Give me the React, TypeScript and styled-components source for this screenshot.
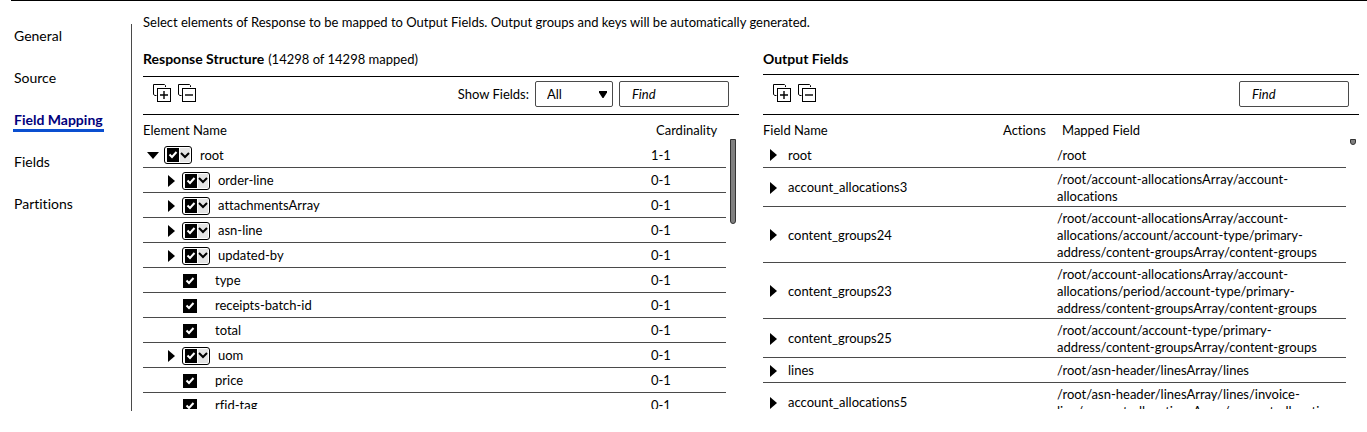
import React from "react";
import styled, { createGlobalStyle, css } from "styled-components";

const GlobalStyle = createGlobalStyle`
  *, *::before, *::after { box-sizing: border-box; }
  body {
    margin: 0;
    background: #fff;
    color: #000;
    font: 13px/20px Lato, "Liberation Sans", sans-serif;
    font-variant-ligatures: none;
  }
  button, input, select { font: inherit; color: inherit; }
`;

const Shell = styled.div`
  display: flex;
  height: 100vh;
  min-height: 240px;
  margin-left: 11px;
  border-top: 1px solid #000;
`;

const Sidebar = styled.nav`
  display: flex;
  flex-direction: column;
  align-items: flex-start;
  gap: 21px;
  flex: 0 0 121px;
  margin: 23px 0 21px;
  padding: 3px 0 0 2px;
  border-right: 1px solid #4a4a4a;
`;

const NavLink = styled.a<{ $active?: boolean }>`
  padding: 0 1px;
  border-bottom: 3px solid ${(p) => (p.$active ? "#0a4fd0" : "transparent")};
  color: ${(p) => (p.$active ? "#00007c" : "#000")};
  font-size: 14px;
  font-weight: ${(p) => (p.$active ? 700 : 400)};
  line-height: 18px;
  text-decoration: none;
`;

const Main = styled.main`
  display: flex;
  flex-direction: column;
  flex: 1;
  min-width: 0;
  padding: 11px 8px 23px 11px;
`;

const Description = styled.p`
  margin: 0;
`;

const Panels = styled.div`
  display: grid;
  grid-template-columns: 1fr 1fr;
  grid-template-rows: minmax(0, 1fr);
  gap: 24px;
  flex: 1;
  min-height: 0;
`;

const Panel = styled.section`
  display: flex;
  flex-direction: column;
  min-width: 0;
`;

const PanelHeader = styled.header<{ $tight?: boolean }>`
  display: flex;
  gap: 4px;
  padding: 17px 0 ${(p) => (p.$tight ? 5 : 7)}px;
`;

const PanelTitle = styled.h2`
  margin: 0;
  font-size: 14px;
  font-weight: 700;
`;

const Toolbar = styled.div<{ $tall?: boolean }>`
  display: flex;
  align-items: flex-end;
  gap: 6px;
  height: ${(p) => (p.$tall ? 41 : 39)}px;
  flex: none;
  padding: 0 10px 7px;
  border: solid #000;
  border-width: 1px 0;
`;

const ToolGroup = styled.div`
  display: flex;
  align-items: center;
  gap: 5px;
  height: 26px;
  margin-right: auto;
`;

const IconButton = styled.button`
  display: flex;
  padding: 0;
  border: 0;
  background: none;
`;

const FieldLabel = styled.label`
  display: flex;
  align-items: center;
  gap: 6px;
`;

const fieldBox = css`
  height: 26px;
  border: 1px solid #4a4a4a;
  border-radius: 2px;
  background: #fff;
`;

const SelectWrap = styled.span`
  display: grid;
  grid-template-columns: 1fr 14px;
  align-items: center;

  > * { grid-row: 1; }
  > svg { grid-column: 2; pointer-events: none; }
`;

const Select = styled.select`
  ${fieldBox}
  grid-column: 1 / -1;
  width: 78px;
  padding: 0 11px;
  appearance: none;
`;

const FindInput = styled.input`
  ${fieldBox}
  width: 110px;
  padding: 0 12px;
  &::placeholder { color: #000; font-style: italic; opacity: 1; }
`;

const TableArea = styled.div`
  display: flex;
  flex: 1;
  min-height: 0;
  overflow: hidden;
`;

const Table = styled.table`
  flex: 1;
  width: 0;
  height: 0;
  table-layout: fixed;
  border-collapse: collapse;

  th {
    height: 27px;
    padding: 3px 0 0;
    font-weight: 400;
    text-align: left;
  }
  td {
    padding: 0;
    border-bottom: 1px solid #4a4a4a;
    line-height: 17px;
  }
`;

const Col = styled.col<{ $width?: number }>`
  width: ${(p) => (p.$width ? `${p.$width}px` : "auto")};
`;

const Row = styled.tr`
  height: 25px;
`;

const MappedHead = styled.th`
  &&& { padding-left: 5px; }
`;

const CardinalityHead = styled.th`
  &&& { padding-left: 13px; }
`;

const CardinalityCell = styled.td`
  &&& { padding: 2px 0 0 8px; }
`;

const PathCell = styled.td`
  &&& {
    padding: 3px 0 1px;
    white-space: pre;
  }
`;

const NameCell = styled.div<{ $level: number }>`
  display: flex;
  align-items: center;
  padding-top: 2px;
  padding-left: ${(p) => 3 + p.$level * 18}px;
`;

const CaretSlot = styled.button`
  display: flex;
  justify-content: center;
  width: 14px;
  margin-right: 4px;
  padding: 0;
  border: 0;
  background: none;
`;

const CaretSpace = styled.span`
  width: 19px;
`;

const NameLabel = styled.label<{ $gap?: number }>`
  margin-left: ${(p) => p.$gap ?? 8}px;
`;

const SplitCheck = styled.span`
  display: flex;
  align-items: center;
  gap: 1px;
  width: 28px;
  height: 18px;
  padding: 0 1px 0 2px;
  border: 1px solid #000;
  border-radius: 3px;
  background: #fff;
`;

const SplitMenu = styled.button`
  display: flex;
  align-items: center;
  justify-content: center;
  width: 10px;
  height: 14px;
  padding: 0;
  border: 0;
  background: #e4e4e4;
`;

const CheckWrap = styled.span`
  display: grid;
  place-items: center;

  > * { grid-area: 1 / 1; }
  > svg { pointer-events: none; }
`;

const CheckInput = styled.input<{ $size: number }>`
  width: ${(p) => p.$size}px;
  height: 14px;
  margin: 0;
  background: #000;
  appearance: none;
`;

const ScrollTrack = styled.div`
  flex: 0 0 13px;
  padding: 24px 3px 0 4px;
`;

const ScrollThumb = styled.div<{ $length: number }>`
  height: ${(p) => p.$length}px;
  border: 1px solid #333;
  border-radius: 0 0 3px 3px;
  background: #808080;
`;

const StackIcon = ({ plus }: { plus?: boolean }) => (
  <svg width="20" height="20" viewBox="0 0 20 20" fill="none" stroke="#000">
    <path d="M12.5 3V1.5L11.5 .5H.5V10.5L2 11.5H3.5" />
    <rect x="4.5" y="4.5" width="13" height="13" />
    <path d={plus ? "M7 11H15M11 7V15" : "M7 11H15"} strokeWidth="1.4" />
  </svg>
);

const CaretRight = () => (
  <svg width="7" height="12" viewBox="0 0 7 12">
    <path d="M0 0L7 6L0 12Z" />
  </svg>
);

const CaretDown = () => (
  <svg width="12" height="7" viewBox="0 0 12 7">
    <path d="M0 0H12L6 7Z" />
  </svg>
);

const SelectArrow = () => (
  <svg width="8" height="7" viewBox="0 0 8 7">
    <path d="M0 0H8V1.5L4.5 7H3.5L0 1.5Z" />
  </svg>
);

const Checkbox = ({ id, size }: { id: string; size: number }) => (
  <CheckWrap>
    <CheckInput id={id} $size={size} type="checkbox" defaultChecked />
    <svg width="10" height="10" viewBox="0 0 10 10" fill="none" stroke="#fff" strokeWidth="2">
      <path d="M1.5 4.5L4 7L8.5 2" />
    </svg>
  </CheckWrap>
);

const ChevronDown = () => (
  <svg width="10" height="7" viewBox="0 0 10 7" fill="none" stroke="#000" strokeWidth="2">
    <path d="M1 1L5 5L9 1" />
  </svg>
);

type Element = { name: string; level: number; group?: boolean; open?: boolean; card: string };

const elements: Element[] = [
  { name: "root", level: 0, group: true, open: true, card: "1-1" },
  { name: "order-line", level: 1, group: true, card: "0-1" },
  { name: "attachmentsArray", level: 1, group: true, card: "0-1" },
  { name: "asn-line", level: 1, group: true, card: "0-1" },
  { name: "updated-by", level: 1, group: true, card: "0-1" },
  { name: "type", level: 1, card: "0-1" },
  { name: "receipts-batch-id", level: 1, card: "0-1" },
  { name: "total", level: 1, card: "0-1" },
  { name: "uom", level: 1, group: true, card: "0-1" },
  { name: "price", level: 1, card: "0-1" },
  { name: "rfid-tag", level: 1, card: "0-1" },
];

const outputs = [
  { name: "root", path: ["/root"] },
  { name: "account_allocations3", path: ["/root/account-allocationsArray/account-", "allocations"] },
  {
    name: "content_groups24",
    path: [
      "/root/account-allocationsArray/account-",
      "allocations/account/account-type/primary-",
      "address/content-groupsArray/content-groups",
    ],
  },
  {
    name: "content_groups23",
    path: [
      "/root/account-allocationsArray/account-",
      "allocations/period/account-type/primary-",
      "address/content-groupsArray/content-groups",
    ],
  },
  {
    name: "content_groups25",
    path: ["/root/account/account-type/primary-", "address/content-groupsArray/content-groups"],
  },
  { name: "lines", path: ["/root/asn-header/linesArray/lines"] },
  {
    name: "account_allocations5",
    path: ["/root/asn-header/linesArray/lines/invoice-", "line/account-allocationsArray/account-allocations"],
  },
];

const navItems = ["General", "Source", "Field Mapping", "Fields", "Partitions"];

const ExpandTools = () => (
  <ToolGroup>
    <IconButton aria-label="Expand all">
      <StackIcon plus />
    </IconButton>
    <IconButton aria-label="Collapse all">
      <StackIcon />
    </IconButton>
  </ToolGroup>
);

const ElementRow = ({ item }: { item: Element }) => {
  const id = `element-${item.name}`;
  return (
    <Row>
      <td>
        <NameCell $level={item.level}>
          {item.group ? (
            <>
              <CaretSlot aria-label={`Toggle ${item.name}`}>{item.open ? <CaretDown /> : <CaretRight />}</CaretSlot>
              <SplitCheck>
                <Checkbox id={id} size={12} />
                <SplitMenu aria-label={`Selection options for ${item.name}`}>
                  <ChevronDown />
                </SplitMenu>
              </SplitCheck>
              <NameLabel htmlFor={id}>{item.name}</NameLabel>
            </>
          ) : (
            <>
              <CaretSpace />
              <Checkbox id={id} size={14} />
              <NameLabel htmlFor={id} $gap={18}>
                {item.name}
              </NameLabel>
            </>
          )}
        </NameCell>
      </td>
      <CardinalityCell>{item.card}</CardinalityCell>
    </Row>
  );
};

const ResponsePanel = () => (
  <Panel>
    <PanelHeader>
      <PanelTitle>Response Structure</PanelTitle>
      <span>(14298 of 14298 mapped)</span>
    </PanelHeader>
    <Toolbar>
      <ExpandTools />
      <FieldLabel>
        Show Fields:
        <SelectWrap>
          <Select defaultValue="All">
            <option>All</option>
          </Select>
          <SelectArrow />
        </SelectWrap>
      </FieldLabel>
      <FindInput aria-label="Find element" placeholder="Find" />
    </Toolbar>
    <TableArea>
      <Table>
        <colgroup>
          <Col />
          <Col $width={83} />
        </colgroup>
        <thead>
          <tr>
            <th>Element Name</th>
            <CardinalityHead>Cardinality</CardinalityHead>
          </tr>
        </thead>
        <tbody>
          {elements.map((item) => (
            <ElementRow key={item.name} item={item} />
          ))}
        </tbody>
      </Table>
      <ScrollTrack>
        <ScrollThumb $length={85} />
      </ScrollTrack>
    </TableArea>
  </Panel>
);

const OutputPanel = () => (
  <Panel>
    <PanelHeader $tight>
      <PanelTitle>Output Fields</PanelTitle>
    </PanelHeader>
    <Toolbar $tall>
      <ExpandTools />
      <FindInput aria-label="Find field" placeholder="Find" />
    </Toolbar>
    <TableArea>
      <Table>
        <colgroup>
          <Col />
          <Col $width={54} />
          <Col $width={289} />
        </colgroup>
        <thead>
          <tr>
            <th>Field Name</th>
            <th>Actions</th>
            <MappedHead>Mapped Field</MappedHead>
          </tr>
        </thead>
        <tbody>
          {outputs.map((field) => (
            <Row key={field.name}>
              <td>
                <NameCell $level={0}>
                  <CaretSlot aria-label={`Toggle ${field.name}`}>
                    <CaretRight />
                  </CaretSlot>
                  <NameLabel as="span" $gap={4}>
                    {field.name}
                  </NameLabel>
                </NameCell>
              </td>
              <td />
              <PathCell>{field.path.join("\n")}</PathCell>
            </Row>
          ))}
        </tbody>
      </Table>
      <ScrollTrack>
        <ScrollThumb $length={6} />
      </ScrollTrack>
    </TableArea>
  </Panel>
);

export default function App() {
  return (
    <>
      <GlobalStyle />
      <Shell>
        <Sidebar>
          {navItems.map((item) => (
            <NavLink key={item} href="#" $active={item === "Field Mapping"}>
              {item}
            </NavLink>
          ))}
        </Sidebar>
        <Main>
          <Description>
            Select elements of Response to be mapped to Output Fields. Output groups and keys will be automatically
            generated.
          </Description>
          <Panels>
            <ResponsePanel />
            <OutputPanel />
          </Panels>
        </Main>
      </Shell>
    </>
  );
}
